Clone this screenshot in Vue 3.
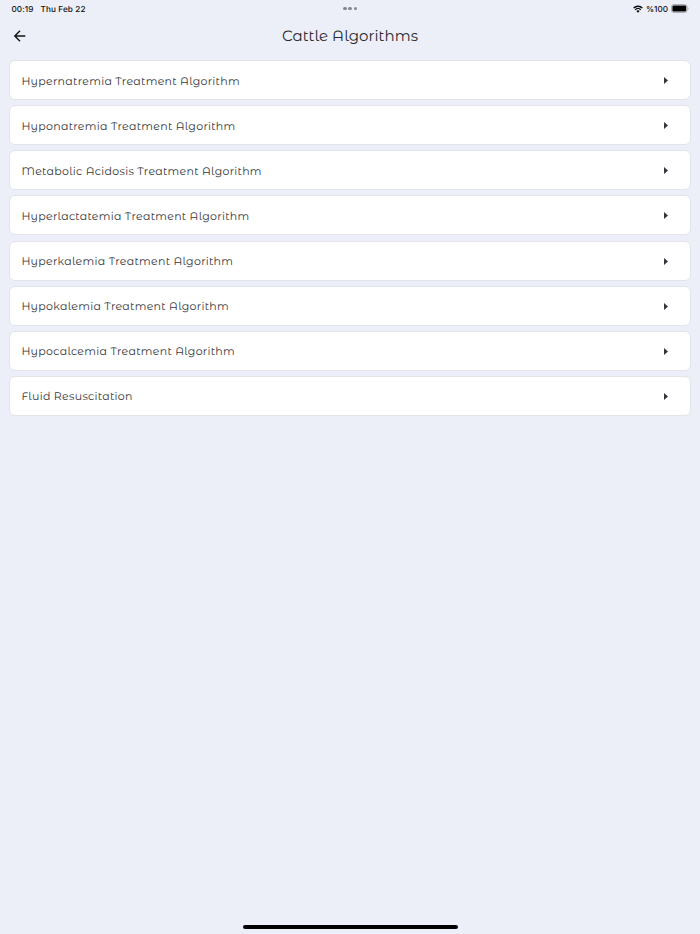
<template>
<div class="screen">
    <div class="status-bar">
        <div class="status-left">
            <span>00:19</span>
            <span>Thu Feb 22</span>
        </div>
        <div class="dots">
            <i></i><i></i><i></i>
        </div>
        <div class="status-right">
            <svg class="wifi" viewBox="0 0 18 14">
                <path d="M1.2 5.2a11.2 11.2 0 0 1 15.6 0M4 8.3a7.2 7.2 0 0 1 10 0" fill="none" stroke="#000" stroke-width="2.3" />
                <path d="M9 13.6 6.1 10.7a4.2 4.2 0 0 1 5.8 0z" />
            </svg>
            <span class="percent">%100</span>
            <svg class="battery" viewBox="0 0 18 9">
                <rect x=".5" y=".5" width="15.6" height="8" rx="2.4" fill="none" stroke="#a2a4aa" stroke-width=".9" />
                <rect x="1.4" y="1.4" width="13.8" height="6.2" rx="1.4" />
                <path d="M16.9 3.2c1 .4 1 2.2 0 2.6z" fill="#a2a4aa" />
            </svg>
        </div>
    </div>

    <header class="nav-bar">
        <button class="back-btn" aria-label="Back">
            <svg viewBox="0 0 16 16">
                <path d="M13.3 8H3M8 2.8 2.8 8 8 13.2" fill="none" stroke="#111215" stroke-width="1.4" />
            </svg>
        </button>
        <h1 class="title">Cattle Algorithms</h1>
    </header>

    <main class="list">
        <button class="card" v-for="name in algorithms" :key="name">
            <span class="name">{{ name }}</span>
            <svg class="arrow" viewBox="0 0 4 7">
                <path d="M0 0 4 3.5 0 7z" />
            </svg>
        </button>
    </main>

    <div class="home-indicator"></div>
</div>
</template>

<script setup>
import { ref } from 'vue';

const algorithms = ref([
    'Hypernatremia Treatment Algorithm',
    'Hyponatremia Treatment Algorithm',
    'Metabolic Acidosis Treatment Algorithm',
    'Hyperlactatemia Treatment Algorithm',
    'Hyperkalemia Treatment Algorithm',
    'Hypokalemia Treatment Algorithm',
    'Hypocalcemia Treatment Algorithm',
    'Fluid Resuscitation'
]);
</script>

<style>
body {
    margin: 0;
    background: #eceff7;
}
</style>

<style scoped>
.screen {
    display: flex;
    flex-direction: column;
    height: 100vh;
    background: #eceff7;
    font-family: "Montserrat Alternates", Lato, sans-serif;
    text-rendering: geometricPrecision;
    overflow: hidden;
}

.status-bar {
    display: grid;
    grid-template-columns: 1fr auto 1fr;
    align-items: center;
    height: 17px;
    padding: 0 11px 0 11.4px;
    box-sizing: border-box;
    font-family: Inter, sans-serif;
    font-size: 8.2px;
    font-weight: 500;
    color: #111215;
}

.status-left {
    display: flex;
    gap: 7px;
    letter-spacing: 0.1px;
}

.dots {
    display: flex;
    gap: 1.6px;
}

.dots i {
    width: 3.8px;
    height: 3.8px;
    border-radius: 50%;
    background: #85878e;
}

.status-right {
    display: flex;
    justify-content: flex-end;
    align-items: center;
}

.wifi {
    width: 10px;
    height: 8px;
    margin-right: 2.5px;
}

.percent {
    margin-right: 3px;
}

.battery {
    width: 18px;
    height: 9px;
}

.nav-bar {
    display: grid;
    grid-template-columns: 28px 1fr 28px;
    align-items: center;
    height: 38px;
    padding: 0 6px;
}

.back-btn {
    display: flex;
    justify-content: center;
    padding: 0;
    border: none;
    background: none;
}

.back-btn svg {
    width: 16px;
    height: 16px;
}

.title {
    margin: 0 0 1px;
    text-align: center;
    font-size: 15px;
    font-weight: 400;
    letter-spacing: 0.06px;
    color: #292a2e;
}

.list {
    display: flex;
    flex-direction: column;
    gap: 5.1px;
    padding: 5.2px 9px 0;
}

.card {
    display: flex;
    justify-content: space-between;
    align-items: center;
    height: 40px;
    box-sizing: border-box;
    padding: 1px 22px 0 11.4px;
    background: #fff;
    border: 1px solid #e3e4e9;
    border-radius: 6px;
    font-family: inherit;
    text-align: left;
    text-rendering: inherit;
}

.name {
    font-size: 11px;
    letter-spacing: 0.29px;
    color: #38393c;
    white-space: nowrap;
}

.arrow {
    width: 4px;
    height: 7px;
    fill: #34353d;
}

.home-indicator {
    width: 215px;
    height: 4px;
    margin: auto auto 5.4px;
    border-radius: 2px;
    background: #000;
}
</style>
